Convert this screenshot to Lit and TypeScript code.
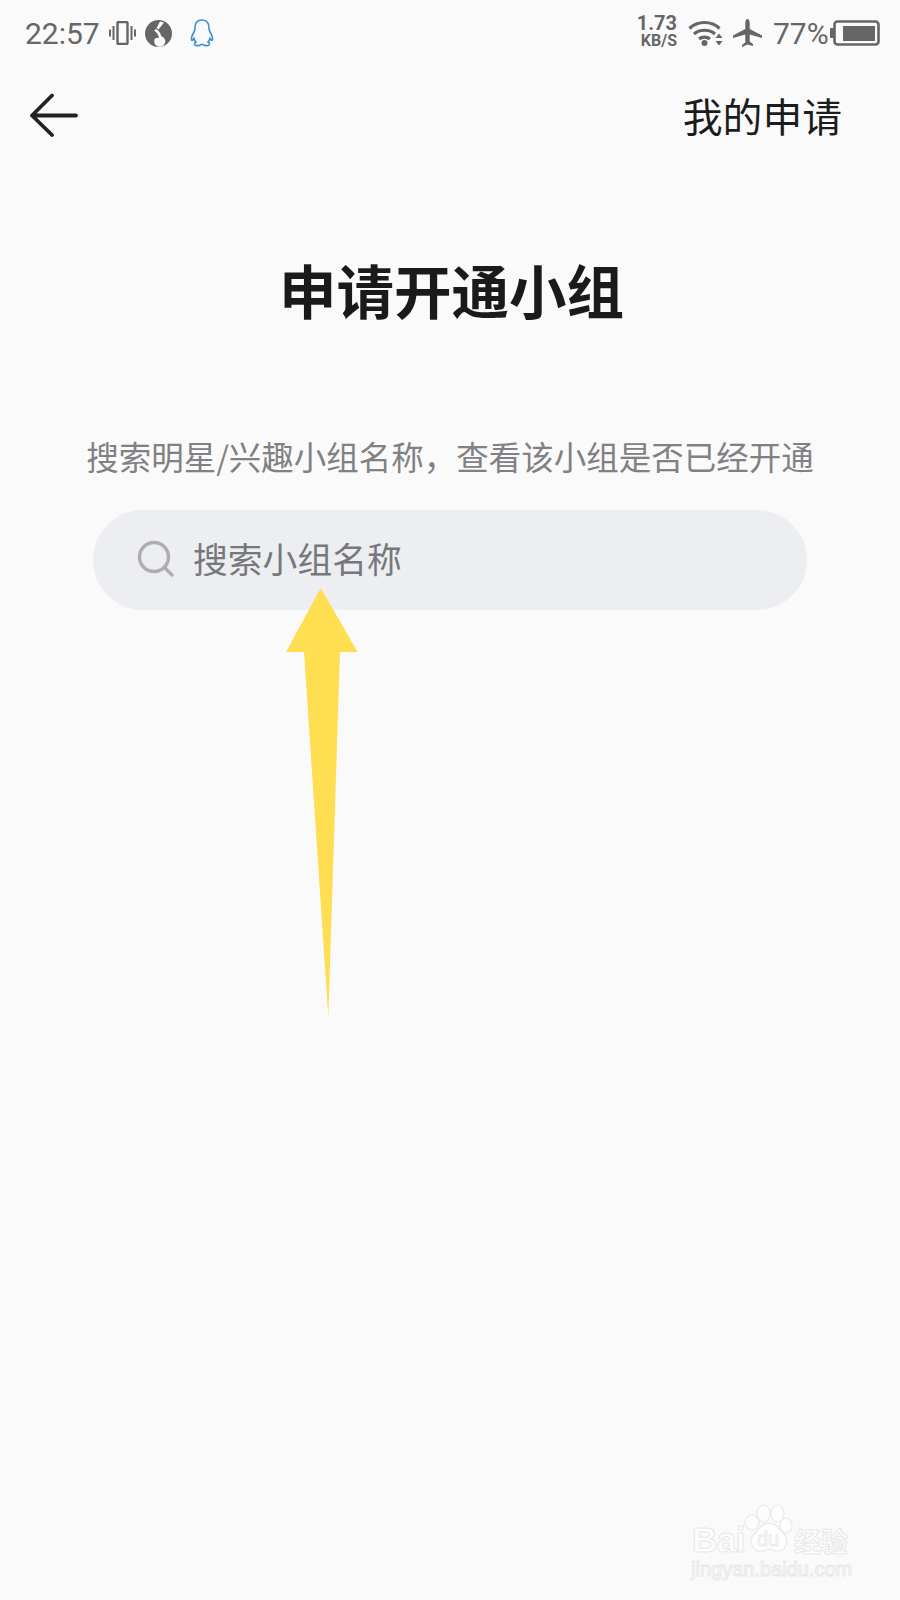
import { LitElement, html, css } from 'lit';
import { customElement } from 'lit/decorators.js';

@customElement('app-root')
export class AppRoot extends LitElement {
  static styles = css`
    :host {
      display: block;
      position: relative;
      min-height: 1600px;
      overflow: hidden;
      background: #fafafa;
      font-family: 'Noto Sans CJK SC', 'Noto Sans', sans-serif;
    }

    .status {
      height: 66px;
      display: flex;
      align-items: center;
      padding: 0 20px 0 25px;
      color: #666;
      font-family: Roboto, sans-serif;
      font-size: 30px;
    }

    .status svg {
      display: block;
      flex: none;
    }

    .time {
      width: 74px;
      margin-right: 10px;
    }

    .music {
      margin: 0 18px 0 9px;
    }

    .speed {
      margin-left: auto;
      margin-right: 11px;
      margin-bottom: 3px;
      width: 40px;
      display: flex;
      flex-direction: column;
      align-items: flex-end;
      font-weight: 700;
      line-height: 17px;
      font-size: 20px;
    }

    .speed small {
      font-size: 16px;
      line-height: 17px;
    }

    .wifi {
      margin-right: 10px;
    }

    .plane {
      margin-right: 11px;
    }

    .percent {
      width: 56px;
      margin-right: 1px;
    }

    .nav {
      height: 97px;
      display: flex;
      align-items: center;
      justify-content: space-between;
      padding: 0 58px 0 29px;
    }

    .mine {
      font-size: 39.8px;
      line-height: 50px;
      color: #1c1c1c;
    }

    .title {
      margin: 86px 0 0;
      padding-left: 3px;
      text-align: center;
      font-size: 57.5px;
      line-height: 80px;
      font-weight: 700;
      color: #1a1a1a;
    }

    .hint {
      margin: 105px 0 0;
      text-align: center;
      font-size: 32.5px;
      line-height: 44px;
      color: #808184;
      white-space: nowrap;
    }

    .search {
      box-sizing: border-box;
      margin: 32px 93px 0;
      height: 100px;
      border-radius: 50px;
      background: #edeef2;
      display: flex;
      align-items: center;
      padding: 0 0 2px 44px;
      gap: 18px;
      font-size: 34.8px;
      color: #77787c;
    }

    .search span {
      padding-bottom: 2px;
    }

    .pointer {
      position: absolute;
      left: 280px;
      top: 580px;
    }

    .mark {
      position: absolute;
      left: 688px;
      top: 1500px;
      width: 170px;
      height: 80px;
      color: #fdfdfd;
      -webkit-text-stroke: 1px #e8e8e8;
      font-family: 'Liberation Sans', sans-serif;
    }

    .mark svg {
      position: absolute;
      left: 52px;
      top: 2px;
    }

    .bai {
      position: absolute;
      left: 4px;
      top: 20px;
      font-size: 35px;
      line-height: 40px;
      font-weight: 700;
      letter-spacing: -0.5px;
    }

    .jing {
      position: absolute;
      left: 106px;
      top: 25px;
      font-family: 'Noto Sans CJK SC', sans-serif;
      font-size: 27px;
      line-height: 32px;
      font-weight: 700;
    }

    .url {
      position: absolute;
      left: 3px;
      top: 57px;
      font-size: 20px;
      line-height: 24px;
      white-space: nowrap;
    }
  `;

  render() {
    return html`
      <div class="status">
        <span class="time">22:57</span>
        <svg width="27" height="24" viewBox="0 0 27 24" fill="none" stroke="#666">
          <rect x="8.500" y="1" width="10" height="22" rx="1" stroke-width="2.400" />
          <path d="M4.500 5v14M1 8.500v7M22.500 5v14M26 8.500v7" stroke-width="2" />
        </svg>
        <svg class="music" width="27" height="27" viewBox="0 0 27 27">
          <circle cx="13.500" cy="13.500" r="13.500" fill="#666" />
          <path d="M11 9c3 2 5 4 5 7a5.500 5.500 0 1 1-6 2.500c1.500-.8 3-1 4-.5-.5-3-2-5.500-5-7.500z" fill="#fafafa" />
          <path d="M15 1.500l4 1-5.500 7-2-1.500z" fill="#fafafa" />
        </svg>
        <svg width="24" height="28" viewBox="0 0 24 28" fill="none" stroke="#3b8fd0" stroke-width="1.600">
          <path
            d="M12 1c-5 0-7 3.500-7 8 0 1.500-.2 2.500-1 4-1.500 2.500-3 5-2.500 8 .5 1 1.800-.2 2.500-1.500.5 1.500 1 2.500 2 3.500-1 .5-2 1.500-1 3 1 1 5 .8 6-.5h2c1 1.300 5 1.500 6 .5 1-1.500 0-2.500-1-3 1-1 1.500-2 2-3.500.7 1.300 2 2.500 2.500 1.500.5-3-1-5.500-2.500-8-.8-1.500-1-2.500-1-4 0-4.500-2-8-7-8z"
          />
        </svg>
        <div class="speed"><span>1.73</span><small>KB/S</small></div>
        <svg class="wifi" width="35" height="26" viewBox="0 0 35 26" fill="none" stroke="#666" stroke-width="3.200">
          <path d="M1.500 8.500C9.500 .5 23.500 .5 31.500 8.500M6 14c5.500-5 15.500-5 21 0M11 19c3-2.500 8-2.500 11 0" />
          <circle cx="16.500" cy="23" r="3" fill="#666" stroke="none" />
          <path d="M31 13.500l-3.500 4.500h7zM31 25.500l-3.500-4.500h7z" fill="#666" stroke="none" />
        </svg>
        <svg class="plane" width="29" height="28" viewBox="0 0 29 28">
          <path
            d="M14.500 0c1.300 0 2.200 2 2.200 4v6l12.300 6.500V19l-12.300-3.500v7l3.300 2.500v2l-5.500-1.500L9 28v-2l3.300-2.500v-8L0 19v-2.500L12.300 10V4c0-2 .9-4 2.200-4z"
            fill="#666"
          />
        </svg>
        <span class="percent">77%</span>
        <svg width="50" height="26" viewBox="0 0 50 26">
          <rect x="0" y="8" width="4" height="10" rx="1" fill="#666" />
          <rect x="4.500" y="1.500" width="44" height="23" rx="3" fill="none" stroke="#666" stroke-width="2.600" />
          <rect x="13" y="6" width="32" height="15" fill="#666" />
        </svg>
      </div>

      <div class="nav">
        <svg width="50" height="44" viewBox="0 0 50 44" fill="none" stroke="#222" stroke-width="3.800" stroke-linecap="round" stroke-linejoin="round">
          <path d="M23 2.500L3 22.500l20 19.500M3 22.500h44" />
        </svg>
        <span class="mine">我的申请</span>
      </div>

      <h1 class="title">申请开通小组</h1>
      <p class="hint">搜索明星/兴趣小组名称，查看该小组是否已经开通</p>

      <div class="search">
        <svg width="38" height="38" viewBox="0 0 38 38" fill="none" stroke="#aeaeb0" stroke-width="3.400" stroke-linecap="round">
          <circle cx="17" cy="17" r="14.500" />
          <path d="M28 28l7 7" />
        </svg>
        <span>搜索小组名称</span>
      </div>

      <svg class="pointer" width="90" height="440" viewBox="0 0 90 440">
        <path d="M40.700 8L77.700 72H60L48.300 437 24 72H6z" fill="#ffdf51" />
      </svg>

      <div class="mark">
        <svg width="56" height="56" viewBox="0 0 56 56" fill="#fdfdfd" stroke="#e8e8e8" stroke-width="1.200">
          <ellipse cx="12" cy="20.500" rx="7" ry="7.500" />
          <ellipse cx="23.500" cy="11.500" rx="6.500" ry="8.500" />
          <ellipse cx="37.500" cy="11.500" rx="6.500" ry="8.500" />
          <ellipse cx="46" cy="23.500" rx="6" ry="7.500" />
          <path d="M29 21c8 0 10 7 15 11 6 6 2 18-7 17-4 0-5-2-8-2s-4 2-8 2c-9 1-13-11-7-17 5-4 7-11 15-11z" />
          <text x="28" y="44" text-anchor="middle" font-size="20" font-family="Liberation Sans, sans-serif" stroke-width="0.800">du</text>
        </svg>
        <span class="bai">Bai</span>
        <span class="jing">经验</span>
        <span class="url">jingyan.baidu.com</span>
      </div>
    `;
  }
}

declare global {
  interface HTMLElementTagNameMap {
    'app-root': AppRoot;
  }
}
